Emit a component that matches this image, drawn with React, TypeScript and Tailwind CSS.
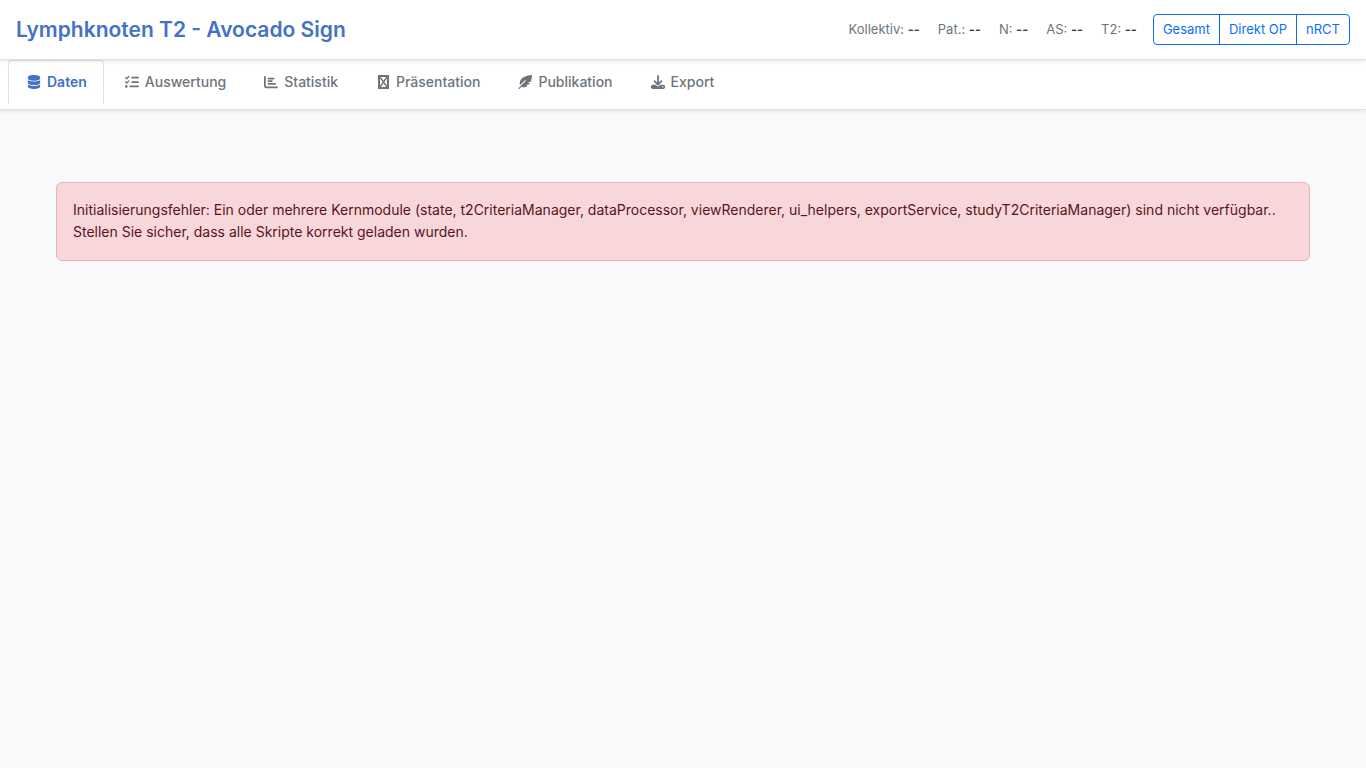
import React from "react";
import {
  FaChartBar,
  FaDatabase,
  FaDownload,
  FaFeatherPointed,
  FaListCheck,
} from "react-icons/fa6";

type Tab = { id: string; label: string; icon: React.ReactNode; active?: boolean };

const CrossedBoxIcon = () => (
  <svg viewBox="0 0 11 14" fill="none" stroke="currentColor" className="h-3.5 w-[11px]" aria-hidden="true">
    <path strokeWidth="2" d="M1 1h9v12H1z" />
    <path strokeWidth="1.4" d="M2 2l7 10M9 2l-7 10" />
  </svg>
);

const tabs: Tab[] = [
  { id: "daten", label: "Daten", icon: <FaDatabase />, active: true },
  { id: "auswertung", label: "Auswertung", icon: <FaListCheck /> },
  { id: "statistik", label: "Statistik", icon: <FaChartBar /> },
  { id: "praesentation", label: "Präsentation", icon: <CrossedBoxIcon /> },
  { id: "publikation", label: "Publikation", icon: <FaFeatherPointed /> },
  { id: "export", label: "Export", icon: <FaDownload /> },
];

const stats = ["Kollektiv", "Pat.", "N", "AS", "T2"];
const cohorts = ["Gesamt", "Direkt OP", "nRCT"];

export default function App() {
  return (
    <div className="min-h-screen bg-[#f8f9fa] font-['Inter',sans-serif] text-sm text-[#212529]">
      <header className="relative z-10 flex h-[60px] items-center justify-between border-b border-[#dee2e6] bg-white px-4 shadow-[0_2px_4px_rgba(0,0,0,0.075)]">
        <h1 className="text-[21px] font-semibold text-[#4472c4]">Lymphknoten T2 - Avocado Sign</h1>
        <div className="flex items-center gap-4 text-[13px] text-[#6c757d]">
          <div className="flex gap-[18px]">
            {stats.map((s) => (
              <span key={s}>
                {s}: <strong className="font-semibold text-[#343a40]">--</strong>
              </span>
            ))}
          </div>
          <div className="flex" role="group" aria-label="Kollektiv">
            {cohorts.map((c) => (
              <button
                key={c}
                type="button"
                className="-ml-px h-[31px] border border-[#0d6efd] px-[9px] text-[#0d6efd] first:ml-0 first:rounded-l last:rounded-r"
              >
                {c}
              </button>
            ))}
          </div>
        </div>
      </header>
      <nav className="border-b border-[#dee2e6] bg-white px-2 pb-[5px] shadow-[0_2px_4px_rgba(0,0,0,0.075)]">
        <div className="flex gap-0.5" role="tablist">
          {tabs.map((t) => (
            <button
              key={t.id}
              type="button"
              role="tab"
              aria-selected={!!t.active}
              className={
                t.active
                  ? "flex h-11 items-center gap-1 rounded-t border border-b-0 border-[#dee2e6] bg-white px-4 pb-0.5 font-semibold text-[#4472c4]"
                  : "flex h-11 items-center gap-1 border border-b-0 border-transparent px-4 pb-0.5 font-medium text-[#6c757d]"
              }
            >
              <span className="flex w-[18px] justify-center">{t.icon}</span>
              {t.label}
            </button>
          ))}
        </div>
      </nav>
      <main className="px-14 pt-[72px]">
        <div
          role="alert"
          className="rounded-md border border-[#f1aeb5] bg-[#f8d7da] px-4 pt-4 pb-[17px] leading-[22px] text-[#58151c]"
        >
          Initialisierungsfehler: Ein oder mehrere Kernmodule (state, t2CriteriaManager, dataProcessor, viewRenderer,
          ui_helpers, exportService, studyT2CriteriaManager) sind nicht verfügbar.. Stellen Sie sicher, dass alle Skripte
          korrekt geladen wurden.
        </div>
      </main>
    </div>
  );
}
